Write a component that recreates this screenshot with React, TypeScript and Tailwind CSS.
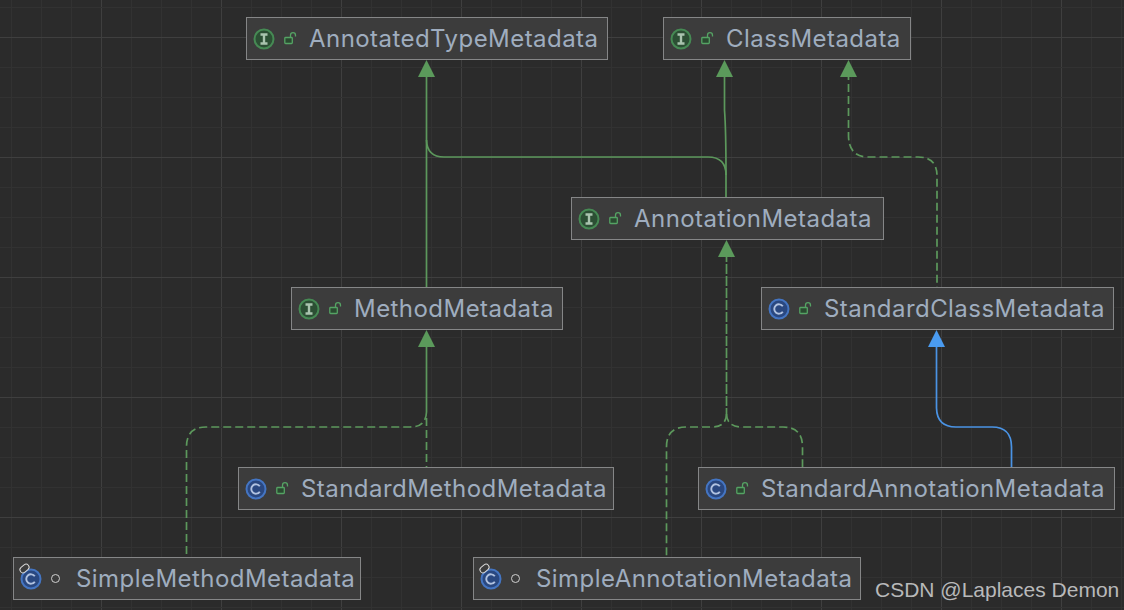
type Kind = "interface" | "class";

type NodeData = {
  name: string;
  x: number;
  y: number;
  w: number;
  kind: Kind;
  simple?: boolean;
};

const nodes: NodeData[] = [
  { name: "AnnotatedTypeMetadata", x: 246, y: 17, w: 362, kind: "interface" },
  { name: "ClassMetadata", x: 663, y: 17, w: 248, kind: "interface" },
  { name: "AnnotationMetadata", x: 571, y: 197, w: 313, kind: "interface" },
  { name: "MethodMetadata", x: 291, y: 287, w: 272, kind: "interface" },
  { name: "StandardClassMetadata", x: 761, y: 287, w: 353, kind: "class" },
  { name: "StandardMethodMetadata", x: 238, y: 467, w: 376, kind: "class" },
  { name: "StandardAnnotationMetadata", x: 698, y: 467, w: 417, kind: "class" },
  { name: "SimpleMethodMetadata", x: 13, y: 557, w: 348, kind: "class", simple: true },
  { name: "SimpleAnnotationMetadata", x: 473, y: 557, w: 388, kind: "class", simple: true },
];

const xs = Array.from({ length: 38 }, (_, i) => 11.5 + i * 30);
const ys = Array.from({ length: 21 }, (_, i) => 7.5 + i * 30);

function Grid() {
  return (
    <svg className="absolute inset-0" width="1124" height="610">
      {xs.map((x, i) => (
        <line key={x} x1={x} x2={x} y1="0" y2="610" stroke={i % 4 === 3 ? "#3f3f3f" : "#323232"} />
      ))}
      {ys.map((y, i) => (
        <line key={y} y1={y} y2={y} x1="0" x2="1124" stroke={i % 4 === 1 ? "#3f3f3f" : "#323232"} />
      ))}
    </svg>
  );
}

function Edges() {
  const green = "#5c985c";
  const dash = "8 4";
  const dense = "10 2";
  return (
    <svg className="absolute inset-0" width="1124" height="610" fill="none" strokeWidth="1.7">
      {/* solid extends */}
      <path d="M426.5 72V287" stroke={green} />
      <path d="M426.5 140Q427 157 444 157H708Q726 157 726 175V197" stroke={green} />
      <path d="M724.5 72V110Q726 130 726 175" stroke={green} />
      {/* dashed implements */}
      <path d="M848.5 72V136Q849 157 868 157H918Q937 157 937 176V287" stroke={green} strokeDasharray={dash} />
      {/* two dashed lines share the trunk, so it reads as nearly solid */}
      <path d="M426.500 342V412" stroke={green} />
      <path d="M426.500 412Q426 427 410 427H206Q186.500 427 186.500 447V557" stroke={green} strokeDasharray={dash} />
      <path d="M426.500 418V467" stroke={green} strokeDasharray={dash} />
      <path d="M726.500 252V414" stroke={green} strokeDasharray={dense} />
      <path d="M726.500 414Q726 427 712 427H686Q666.500 427 666.500 447V557" stroke={green} strokeDasharray={dash} />
      <path d="M726.500 414Q727 427 742 427H783Q802.500 427 802.500 447V467" stroke={green} strokeDasharray={dash} />
      {/* blue extends */}
      <path d="M936.5 342V408Q937 427 956 427H992Q1011.500 427 1011.500 447V467" stroke="#4a93e4" />
      {/* arrow heads */}
      <g stroke="none" fill="#5b9a5b">
        <path d="M426.500 60L435 77H418Z" />
        <path d="M724.500 60L733 77H716Z" />
        <path d="M848.500 60L857 77H840Z" />
        <path d="M726.500 240L735 257H718Z" />
        <path d="M426.500 330L435 347H418Z" />
      </g>
      <path d="M936.500 330L945 347H928Z" fill="#4a9bf0" />
    </svg>
  );
}

function KindIcon({ kind }: { kind: Kind }) {
  if (kind === "interface") {
    return (
      <svg width="22" height="22" viewBox="0 0 22 22" fill="none" className="shrink-0">
        <circle cx="11" cy="11" r="9.5" fill="#2c4f34" stroke="#468a54" strokeWidth="2" />
        <path d="M7.500 6.500H14.500M7.500 15.500H14.500M11 6.500V15.500" stroke="#a9c4ae" strokeWidth="2.400" />
      </svg>
    );
  }
  return (
    <svg width="22" height="22" viewBox="0 0 22 22" fill="none" className="shrink-0">
      <circle cx="11" cy="11" r="9.500" fill="#2a4880" stroke="#4475c2" strokeWidth="2" />
      <path d="M14.800 8.300A4.700 4.700 0 1 0 14.800 13.700" stroke="#b0c2e0" strokeWidth="1.900" />
    </svg>
  );
}

function LockIcon() {
  return (
    <svg width="13" height="13" viewBox="0 0 13 13" fill="none" className="shrink-0">
      <rect x="0.800" y="5.500" width="7.500" height="6" rx="0.800" fill="#2a4a30" stroke="#55a364" strokeWidth="1.300" />
      <path d="M6.500 5.500V3.200A2.300 2.300 0 0 1 11.500 3.200V4.500" stroke="#55a364" strokeWidth="1.300" />
    </svg>
  );
}

function DiagramNode({ node }: { node: NodeData }) {
  return (
    <div
      className="absolute h-[43px] flex items-center border border-[#858687] bg-[#3c3c3c]"
      style={{ left: node.x, top: node.y, width: node.w }}
    >
      <div className="relative ml-[6px] flex items-center">
        <KindIcon kind={node.kind} />
        {node.simple && (
          <span className="absolute left-[-1px] top-[-3px] h-[7px] w-[11px] rotate-[-40deg] rounded-full border border-[#d8d8d8] bg-[#3c3c3c]" />
        )}
      </div>
      {node.simple ? (
        <span className="ml-[9px] mr-[3px] h-[9px] w-[9px] shrink-0 rounded-full border-[1.500px] border-[#d0d0d0]" />
      ) : (
        <span className="ml-[9px] flex">
          <LockIcon />
        </span>
      )}
      <span className={`${node.simple ? "ml-[13px]" : "ml-[12px]"} whitespace-nowrap text-[24px] leading-none tracking-[0.45px] text-[#9fadbf] font-['Inter',sans-serif]`}>
        {node.name}
      </span>
    </div>
  );
}

export default function App() {
  return (
    <div className="relative h-[610px] w-[1124px] overflow-hidden bg-[#2b2b2b]">
      <Grid />
      <Edges />
      {nodes.map((node) => (
        <DiagramNode key={node.name} node={node} />
      ))}
      <span className="absolute left-[875px] top-[579px] whitespace-nowrap text-[21px] leading-none text-[#b8b9ba] font-['Liberation_Sans',sans-serif]">
        CSDN @Laplaces Demon
      </span>
    </div>
  );
}
